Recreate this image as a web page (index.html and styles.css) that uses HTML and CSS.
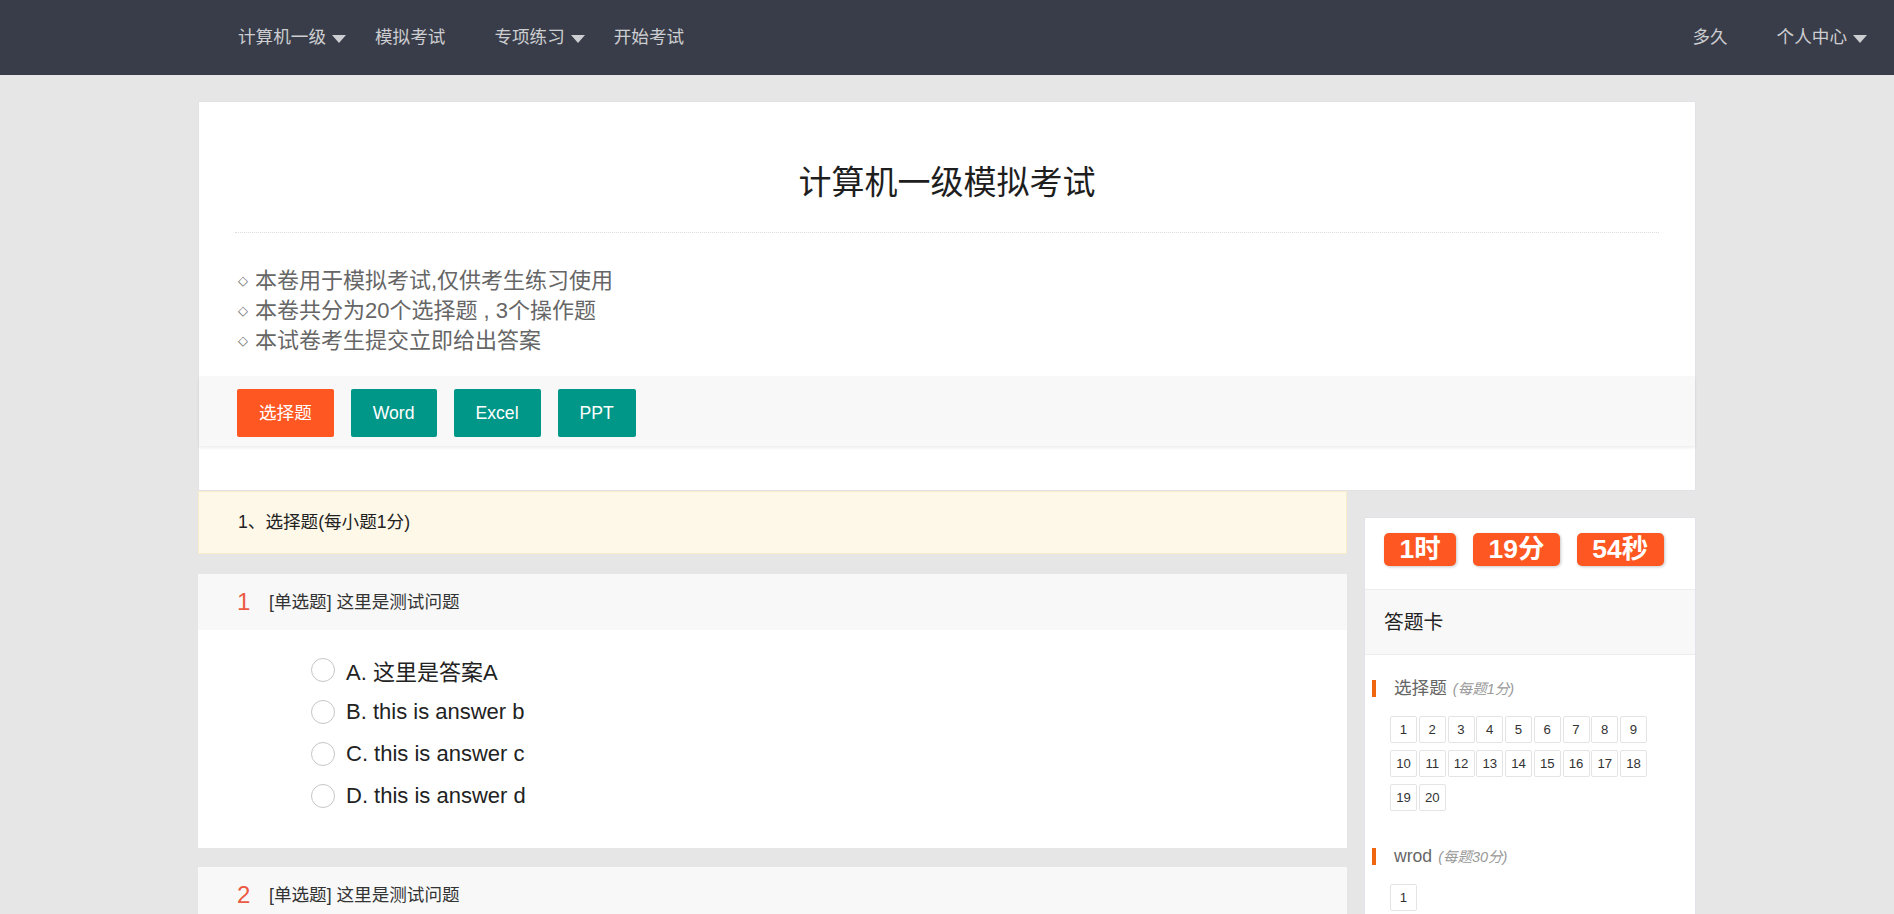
FILE: index.html
```html
<!DOCTYPE html>
<html lang="zh-CN">
<head>
<meta charset="utf-8">
<title>计算机一级模拟考试</title>
<link rel="stylesheet" href="styles.css">
</head>
<body>
<header class="topnav">
  <ul class="nav-group">
    <li class="nav-item drop">计算机一级<span class="caret"></span></li>
    <li class="nav-item">模拟考试</li>
    <li class="nav-item drop">专项练习<span class="caret"></span></li>
    <li class="nav-item">开始考试</li>
  </ul>
  <ul class="nav-group">
    <li class="nav-item">多久</li>
    <li class="nav-item drop">个人中心<span class="caret"></span></li>
  </ul>
</header>

<main class="page">
  <section class="paper-card">
    <div class="paper-head">
      <h1 class="paper-title">计算机一级模拟考试</h1>
    </div>
    <ul class="paper-rules">
      <li><span class="rule-mark">◇</span>本卷用于模拟考试,仅供考生练习使用</li>
      <li><span class="rule-mark">◇</span>本卷共分为20个选择题 , 3个操作题</li>
      <li><span class="rule-mark">◇</span>本试卷考生提交立即给出答案</li>
    </ul>
    <div class="paper-tabs">
      <button class="tab-btn active">选择题</button>
      <button class="tab-btn">Word</button>
      <button class="tab-btn">Excel</button>
      <button class="tab-btn">PPT</button>
    </div>
  </section>

  <div class="exam-body">
    <div class="questions">
      <div class="part-head">1、选择题(每小题1分)</div>

      <div class="question">
        <div class="q-head"><span class="q-num">1</span>[单选题] 这里是测试问题</div>
        <ul class="q-options">
          <li class="option"><span class="radio"></span>A. 这里是答案A</li>
          <li class="option"><span class="radio"></span>B. this is answer b</li>
          <li class="option"><span class="radio"></span>C. this is answer c</li>
          <li class="option"><span class="radio"></span>D. this is answer d</li>
        </ul>
      </div>

      <div class="question">
        <div class="q-head"><span class="q-num">2</span>[单选题] 这里是测试问题</div>
        <ul class="q-options">
          <li class="option"><span class="radio"></span>A. 这里是答案A</li>
          <li class="option"><span class="radio"></span>B. this is answer b</li>
          <li class="option"><span class="radio"></span>C. this is answer c</li>
          <li class="option"><span class="radio"></span>D. this is answer d</li>
        </ul>
      </div>
    </div>

    <aside class="answer-card">
      <div class="timer">
        <span class="time-badge">1时</span>
        <span class="time-badge">19分</span>
        <span class="time-badge">54秒</span>
      </div>
      <div class="card-title">答题卡</div>
      <div class="card-section">
        <div class="section-title">选择题<em>(每题1分)</em></div>
        <div class="num-grid">
          <span class="num">1</span><span class="num">2</span><span class="num">3</span><span class="num">4</span><span class="num">5</span><span class="num">6</span><span class="num">7</span><span class="num">8</span><span class="num">9</span><span class="num">10</span><span class="num">11</span><span class="num">12</span><span class="num">13</span><span class="num">14</span><span class="num">15</span><span class="num">16</span><span class="num">17</span><span class="num">18</span><span class="num">19</span><span class="num">20</span>
        </div>
      </div>
      <div class="card-section">
        <div class="section-title">wrod<em>(每题30分)</em></div>
        <div class="num-grid">
          <span class="num">1</span>
        </div>
      </div>
      <div class="card-section">
        <div class="section-title">excel<em>(每题30分)</em></div>
        <div class="num-grid">
          <span class="num">1</span>
        </div>
      </div>
    </aside>
  </div>
</main>
</body>
</html>
```

FILE: styles.css
```css
* { box-sizing: border-box; }

html, body { overflow: hidden; }

body {
  margin: 0;
  background: #e6e6e6;
  font-family: "Liberation Sans", "Noto Sans CJK SC", sans-serif;
  color: #333;
}

ul { list-style: none; margin: 0; padding: 0; }

/* ---------- top navigation ---------- */
.topnav {
  height: 75px;
  background: #393d49;
  display: flex;
  justify-content: space-between;
  padding: 0 22px 0 214px;
}

.nav-group { display: flex; }

.nav-item {
  display: flex;
  align-items: center;
  padding: 0 25px 0 24px;
  font-size: 17.6px;
  line-height: 75px;
  color: rgba(255, 255, 255, 0.75);
}

.nav-item.drop { padding-right: 5px; }

.caret {
  width: 0;
  height: 0;
  margin-left: 6px;
  margin-top: 2px;
  border-left: 7px solid transparent;
  border-right: 7px solid transparent;
  border-top: 8px solid rgba(255, 255, 255, 0.75);
}

/* ---------- page ---------- */
.page {
  width: 1498px;
  margin: 26px auto 0;
}

.paper-card {
  background: #fff;
  border: 1px solid #e2e2e6;
  padding-bottom: 44px;
}

.paper-head {
  margin: 0 36px;
  padding: 57px 0 25px;
  border-bottom: 1px dotted #dcdcdc;
}

.paper-title {
  margin: 0;
  text-align: center;
  font-size: 33px;
  line-height: 48px;
  font-weight: normal;
  color: #1e1e1e;
}

.paper-rules {
  margin: 33px 0 20px;
  padding: 0 36px;
  font-size: 22px;
  line-height: 30px;
  color: #666;
}

.rule-mark {
  display: inline-block;
  width: 17px;
  margin-left: 3px;
  font-family: "DejaVu Sans", sans-serif;
  font-size: 13px;
  vertical-align: 3px;
  line-height: 1;
}

.paper-tabs {
  display: flex;
  gap: 17px;
  padding: 13px 38px 9px;
  background: #f8f8f8;
  box-shadow: 0 2px 3px rgba(0, 0, 0, 0.07);
}

.tab-btn {
  height: 48px;
  padding: 0 22px;
  border: 0;
  border-radius: 2px;
  background: #009688;
  color: #fff;
  font-family: inherit;
  font-size: 17.6px;
  line-height: 48px;
}

.tab-btn.active { background: #ff5722; }

/* ---------- exam body ---------- */
.exam-body {
  display: flex;
  align-items: flex-start;
  gap: 17px;
}

.questions { flex: 1; }

.part-head {
  height: 63px;
  line-height: 61px;
  padding-left: 39px;
  background: #fef8e8;
  border: 1px solid #f8ecca;
  font-size: 17.6px;
  color: #222;
  margin-bottom: 20px;
}

.question {
  background: #fff;
  margin-bottom: 19px;
}

.q-head {
  height: 56px;
  line-height: 56px;
  padding-left: 39px;
  background: #f8f8f8;
  font-size: 17.6px;
  color: #333;
}

.q-num {
  display: inline-block;
  width: 32px;
  font-size: 24px;
  color: #eb5a41;
  vertical-align: top;
}

.q-options {
  padding: 19px 0 31px 113px;
}

.option {
  display: flex;
  align-items: center;
  height: 42px;
  font-size: 22px;
  color: #222;
}

.radio {
  width: 24px;
  height: 24px;
  border: 1px solid #c6c6c6;
  border-radius: 50%;
  margin-right: 11px;
  background: #fff;
}

/* ---------- answer card ---------- */
.answer-card {
  width: 332px;
  margin-top: 26px;
  background: #fff;
  border: 1px solid #e2e2e8;
}

.timer {
  display: flex;
  gap: 17px;
  padding: 15px 19px 23px;
  border-bottom: 1px solid #ececec;
}

.time-badge {
  height: 33px;
  line-height: 33px;
  padding: 0 15.5px;
  border-radius: 5px;
  background: #ff5722;
  color: #fff;
  font-size: 26.4px;
  font-weight: bold;
  box-shadow: 1px 1px 3px rgba(0, 0, 0, 0.22);
}

.card-title {
  height: 65px;
  line-height: 64px;
  padding-left: 19px;
  background: #f8f8f8;
  border-bottom: 1px solid #ececec;
  font-size: 19.8px;
  color: #222;
}

.card-section {
  padding: 23px 0 12px;
}

.section-title {
  position: relative;
  padding-left: 29px;
  font-size: 17.6px;
  line-height: 20px;
  color: #666;
}

.section-title::before {
  content: "";
  position: absolute;
  left: 7px;
  top: 1.5px;
  width: 4px;
  height: 17px;
  background: #f0650f;
}

.section-title em {
  margin-left: 6px;
  font-size: 14.5px;
  color: #999;
}

.num-grid {
  display: flex;
  flex-wrap: wrap;
  gap: 7px 1.75px;
  margin-top: 17px;
  padding: 0 25px;
}

.num {
  width: 27px;
  height: 27px;
  line-height: 25px;
  text-align: center;
  border: 1px solid #e4e4e4;
  border-radius: 2px;
  font-size: 13.2px;
  color: #333;
}
```
